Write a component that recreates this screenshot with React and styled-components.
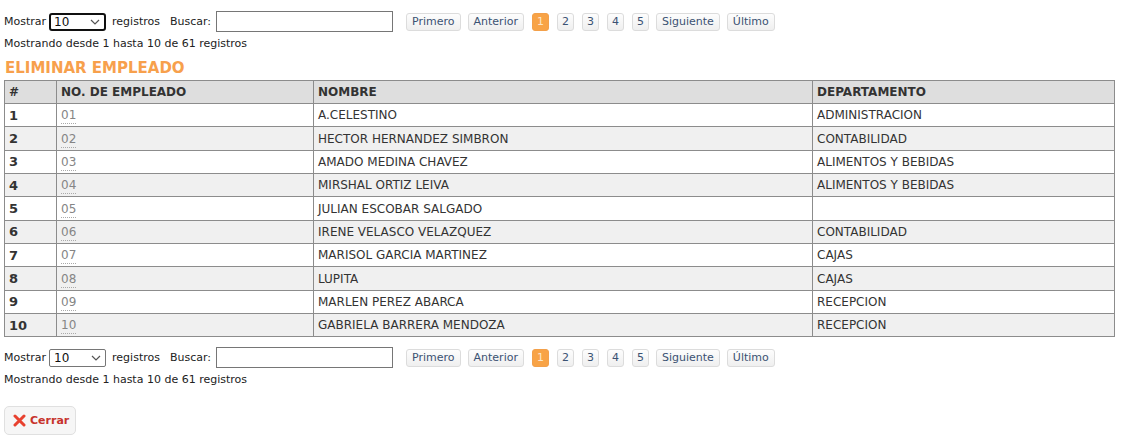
import React from "react";
import styled, { createGlobalStyle, css } from "styled-components";

const Global = createGlobalStyle`
  html, body { margin: 0; padding: 0; background: #fff; }
  body { font-family: "DejaVu Sans", Verdana, sans-serif; font-size: 11px; color: #333; }
`;

const Page = styled.div`
  padding: 11px 4px 10px 4px;
  display: flex;
  flex-direction: column;
`;

const Controls = styled.div`
  display: flex;
  align-items: center;
  height: 21px;
`;

const Label = styled.span`
  font-size: 11px;
  color: #222;
  margin-right: ${(p) => p.$mr || 0}px;
`;

const SelectBox = styled.div`
  position: relative;
  width: 57px;
  height: 18px;
  box-sizing: border-box;
  margin: 0 6px 0 3px;
  border: 1px solid #767676;
  border-radius: 2px;
  display: flex;
  align-items: center;
  padding-left: 4px;
  font-size: 12px;
  color: #111;
  ${(p) =>
    p.$focused &&
    css`
      border: 2px solid #101010;
      border-radius: 3px;
      padding-left: 3px;
    `}
  svg { position: absolute; right: 4px; top: 50%; transform: translateY(-50%); }
`;

const Input = styled.div`
  width: 177px;
  height: 21px;
  box-sizing: border-box;
  border: 1px solid #767676;
  margin-left: 5px;
  margin-right: 13px;
  background: #fff;
`;

const Pager = styled.div`
  display: flex;
  gap: 7px;
  align-items: center;
`;

const PageBtn = styled.span`
  height: 18px;
  box-sizing: border-box;
  padding: 0 ${(p) => (p.$num ? 4 : 5)}px;
  min-width: 16px;
  display: inline-flex;
  align-items: center;
  justify-content: center;
  border: 1px solid #dcdcdc;
  border-radius: 3px;
  background: linear-gradient(#fdfdfd, #efefef);
  color: #3b5273;
  font-size: 11px;
  margin-left: ${(p) => (p.$num ? 1 : 0)}px;
  ${(p) =>
    p.$active &&
    css`
      background: #f8a346;
      border-color: #f3a04a;
      color: #fde6c8;
    `}
`;

const Info = styled.div`
  font-size: 11px;
  color: #222;
  margin-top: ${(p) => p.$mt || 0}px;
  height: 13px;
  line-height: 13px;
`;

const Title = styled.h2`
  margin: 10px 0 0 1px;
  font-size: 15px;
  line-height: 17px;
  font-weight: bold;
  color: #f7a04c;
  font-family: "DejaVu Sans", Verdana, sans-serif;
`;

const Table = styled.table`
  margin-top: 3px;
  width: 1111px;
  border-collapse: collapse;
  font-size: 12px;
  color: #333;
`;

const Th = styled.th`
  text-align: left;
  background: #dedede;
  border: 1px solid #8c8c8c;
  padding: 0 4px;
  height: 22px;
  font-weight: bold;
  color: #333;
  width: ${(p) => p.$w}px;
`;

const Tr = styled.tr`
  background: ${(p) => (p.$alt ? "#f0f0f0" : "#ffffff")};
`;

const Td = styled.td`
  border: 1px solid #8c8c8c;
  padding: 0 4px;
  height: 22.35px;
  font-weight: ${(p) => (p.$bold ? "bold" : "normal")};
  font-size: ${(p) => (p.$bold ? 13 : 12)}px;
  color: #333;
`;

const IdLink = styled.span`
  color: #858585;
  border-bottom: 1px dotted #aaa;
  padding-bottom: 1px;
`;

const CloseBtn = styled.button`
  margin-top: 20px;
  align-self: flex-start;
  width: 72px;
  height: 29px;
  border: 1px solid #e0e0e0;
  border-radius: 5px;
  background: #f6f6f6;
  display: flex;
  align-items: center;
  gap: 4px;
  padding: 0 0 0 8px;
  font-family: "DejaVu Sans", Verdana, sans-serif;
  font-size: 11px;
  font-weight: bold;
  color: #c7332c;
`;

const Chevron = () => (
  <svg width="10" height="6" viewBox="0 0 10 6">
    <path d="M1 1l4 4 4-4" fill="none" stroke="#555" strokeWidth="1.2" />
  </svg>
);

const XIcon = () => (
  <svg width="13" height="13" viewBox="0 0 13 13">
    <path d="M2 2l9 9M11 2l-9 9" stroke="#e8412f" strokeWidth="3" strokeLinecap="round" />
  </svg>
);

const rows = [
  ["01", "A.CELESTINO", "ADMINISTRACION"],
  ["02", "HECTOR HERNANDEZ SIMBRON", "CONTABILIDAD"],
  ["03", "AMADO MEDINA CHAVEZ", "ALIMENTOS Y BEBIDAS"],
  ["04", "MIRSHAL ORTIZ LEIVA", "ALIMENTOS Y BEBIDAS"],
  ["05", "JULIAN ESCOBAR SALGADO", ""],
  ["06", "IRENE VELASCO VELAZQUEZ", "CONTABILIDAD"],
  ["07", "MARISOL GARCIA MARTINEZ", "CAJAS"],
  ["08", "LUPITA", "CAJAS"],
  ["09", "MARLEN PEREZ ABARCA", "RECEPCION"],
  ["10", "GABRIELA BARRERA MENDOZA", "RECEPCION"],
];

const ControlBar = ({ focused }) => (
  <Controls>
    <Label>Mostrar</Label>
    <SelectBox $focused={focused}>
      10
      <Chevron />
    </SelectBox>
    <Label $mr={10}>registros</Label>
    <Label>Buscar:</Label>
    <Input />
    <Pager>
      <PageBtn>Primero</PageBtn>
      <PageBtn>Anterior</PageBtn>
      <PageBtn $num $active>1</PageBtn>
      <PageBtn $num>2</PageBtn>
      <PageBtn $num>3</PageBtn>
      <PageBtn $num>4</PageBtn>
      <PageBtn $num>5</PageBtn>
      <PageBtn>Siguiente</PageBtn>
      <PageBtn>Último</PageBtn>
    </Pager>
  </Controls>
);

export default function App() {
  return (
    <>
      <Global />
      <Page>
        <ControlBar focused />
        <Info $mt={5}>Mostrando desde 1 hasta 10 de 61 registros</Info>
        <Title>ELIMINAR EMPLEADO</Title>
        <Table>
          <thead>
            <tr>
              <Th $w={43}>#</Th>
              <Th $w={248}>NO. DE EMPLEADO</Th>
              <Th $w={490}>NOMBRE</Th>
              <Th>DEPARTAMENTO</Th>
            </tr>
          </thead>
          <tbody>
            {rows.map((r, i) => (
              <Tr key={r[0]} $alt={i % 2 === 1}>
                <Td $bold>{i + 1}</Td>
                <Td>
                  <IdLink>{r[0]}</IdLink>
                </Td>
                <Td>{r[1]}</Td>
                <Td>{r[2]}</Td>
              </Tr>
            ))}
          </tbody>
        </Table>
        <div style={{ height: 10 }} />
        <ControlBar />
        <Info $mt={5}>Mostrando desde 1 hasta 10 de 61 registros</Info>
        <CloseBtn>
          <XIcon />
          Cerrar
        </CloseBtn>
      </Page>
    </>
  );
}
